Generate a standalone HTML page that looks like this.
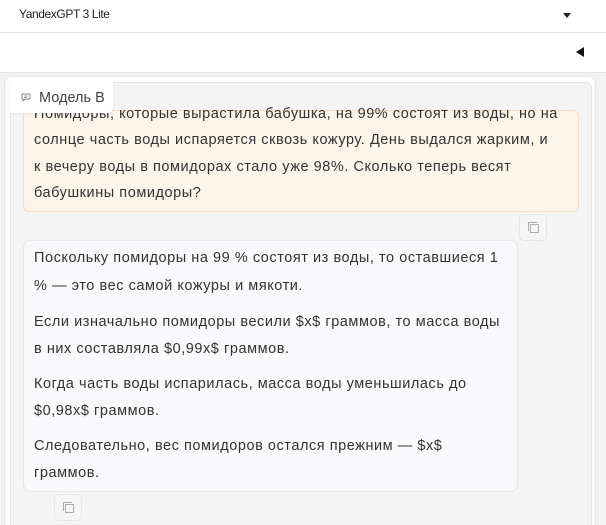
<!DOCTYPE html>
<html><head><meta charset="utf-8"><style>
*{box-sizing:border-box;margin:0;padding:0}
html,body{width:606px;height:525px;overflow:hidden}
body{background:#f3f3f3;font-family:"Liberation Sans",sans-serif;color:#333;position:relative}
.top{position:absolute;left:0;top:0;width:606px;height:33px;background:#fff;border-bottom:1px solid #e3e3e3}
.top span{position:absolute;left:19px;top:7px;font-size:12px;letter-spacing:-0.4px;color:#222}
.caret{position:absolute;left:563px;top:13px;width:0;height:0;border-left:4px solid transparent;border-right:4px solid transparent;border-top:5px solid #222}
.bar{position:absolute;left:0;top:33px;width:606px;height:40px;background:#fff;border-bottom:1px solid #e3e3e3}
.tri{position:absolute;left:576px;top:14px;width:0;height:0;border-top:5px solid transparent;border-bottom:5px solid transparent;border-right:8px solid #111}
.panel{position:absolute;left:4px;top:76px;width:592px;height:460px;background:#fff;border:1px solid #e6e6e6;border-radius:8px}
.inner{position:absolute;left:10px;top:82px;width:582px;height:460px;background:#f4f4f5;border:1px solid #e4e4e7;border-radius:6px}
.label{position:absolute;left:10px;top:82px;width:103px;height:31px;background:#fff;border-radius:0 0 6px 0;box-shadow:0 1px 2px rgba(0,0,0,.08);font-size:14.5px;color:#444;z-index:3}
.label span{position:absolute;left:29px;top:8px}
.user{position:absolute;left:23px;top:110px;width:556px;height:102px;background:#fdf5e9;border:1px solid #f3dfbf;border-radius:6px;font-size:14.5px;letter-spacing:0.55px;line-height:26.5px;color:#333}
.bot{position:absolute;left:23px;top:240px;width:495px;height:252px;background:#f9f9fb;border:1px solid #e6e6ea;border-radius:8px;font-size:14.5px;letter-spacing:0.55px;line-height:27px;color:#333}
.ln{position:absolute;left:10px;white-space:nowrap}
.copy{position:absolute;width:28px;height:27px;border:1px solid #e6e6e6;border-radius:5px;background:#f6f6f6}
.copy i{position:absolute;left:10px;top:9px;width:9px;height:9px;border:1px solid #aaa;background:#f6f6f6}
.copy b{position:absolute;left:8px;top:7px;width:9px;height:9px;border-left:1px solid #aaa;border-top:1px solid #aaa}
</style></head><body>
<div class="top"><span>YandexGPT 3 Lite</span><div class="caret"></div></div>
<div class="bar"><div class="tri"></div></div>
<div class="panel"></div>
<div class="inner"></div>
<div class="label"><svg style="position:absolute;left:11px;top:11px" width="10" height="9" viewBox="0 0 10 9"><path d="M1 1h8v5H4L2 8V6H1z" fill="none" stroke="#888" stroke-width="1"/><path d="M3 3h4M3 4.5h3" stroke="#888" stroke-width=".8"/></svg><span>Модель B</span></div>
<div class="user">
<div class="ln" style="top:-10px">Помидоры, которые вырастила бабушка, на 99% состоят из воды, но на</div>
<div class="ln" style="top:16px">солнце часть воды испаряется сквозь кожуру. День выдался жарким, и</div>
<div class="ln" style="top:43px">к вечеру воды в помидорах стало уже 98%. Сколько теперь весят</div>
<div class="ln" style="top:69px">бабушкины помидоры?</div>
</div>
<div class="copy" style="left:519px;top:214px"><b></b><i></i></div>
<div class="bot">
<div class="ln" style="top:4px">Поскольку помидоры на 99 % состоят из воды, то оставшиеся 1</div>
<div class="ln" style="top:32px">% — это вес самой кожуры и мякоти.</div>
<div class="ln" style="top:68px">Если изначально помидоры весили $x$ граммов, то масса воды</div>
<div class="ln" style="top:95px">в них составляла $0,99x$ граммов.</div>
<div class="ln" style="top:130px">Когда часть воды испарилась, масса воды уменьшилась до</div>
<div class="ln" style="top:157px">$0,98x$ граммов.</div>
<div class="ln" style="top:192px">Следовательно, вес помидоров остался прежним — $x$</div>
<div class="ln" style="top:219px">граммов.</div>
</div>
<div class="copy" style="left:54px;top:494px"><b></b><i></i></div>
</body></html>
